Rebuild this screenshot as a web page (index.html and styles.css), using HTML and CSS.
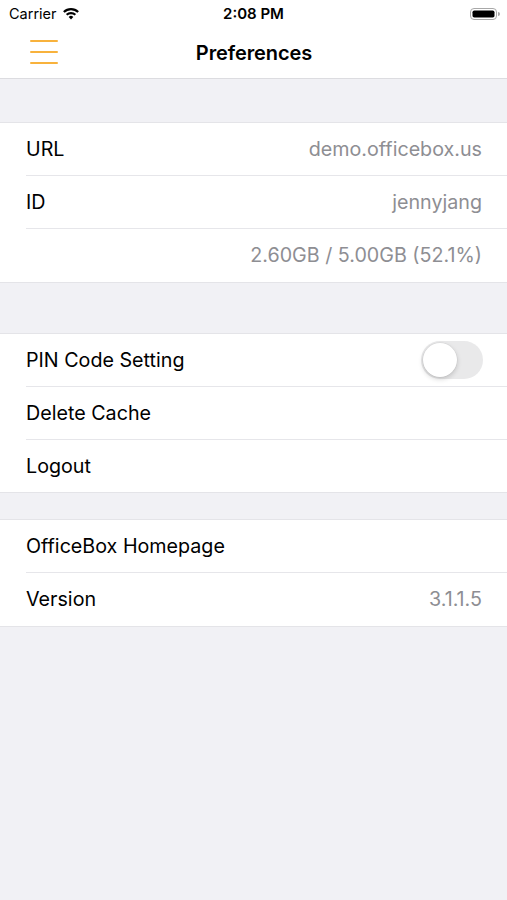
FILE: index.html
```html
<!DOCTYPE html>
<html>
<head>
<meta charset="utf-8">
<link rel="stylesheet" href="styles.css">
</head>
<body>
<div class="screen">
  <div class="status">
    <div class="status-left">
      <span class="carrier">Carrier</span>
      <svg class="wifi" width="18" height="13" viewBox="0 0 18 13">
        <path d="M9 12.5 L11.3 9.9 A3.4 3.4 0 0 0 6.7 9.9 Z" fill="#000"/>
        <path d="M3.9 7.1 A7.3 7.3 0 0 1 14.1 7.1 L12.6 8.6 A5.2 5.2 0 0 0 5.4 8.6 Z" fill="#000"/>
        <path d="M1.1 4.3 A11.3 11.3 0 0 1 16.9 4.3 L15.4 5.8 A9.2 9.2 0 0 0 2.6 5.8 Z" fill="#000"/>
      </svg>
    </div>
    <span class="time">2:08 PM</span>
    <div class="status-right">
      <svg class="battery" width="30" height="14" viewBox="0 0 30 14">
        <rect x="0.5" y="1.5" width="26" height="11" rx="3.5" fill="none" stroke="#a8a8a8" stroke-width="1"/>
        <rect x="2.5" y="3.5" width="22" height="7" rx="1.8" fill="#000"/>
        <path d="M28 5 A2 2 0 0 1 28 9 Z" fill="#a8a8a8"/>
      </svg>
    </div>
  </div>
  <div class="navbar">
    <button class="menu" aria-label="Menu">
      <span></span><span></span><span></span>
    </button>
    <h1 class="title">Preferences</h1>
  </div>

  <div class="gap gap-first"></div>
  <div class="group">
    <div class="row"><span class="label">URL</span><span class="value">demo.officebox.us</span></div>
    <div class="row"><span class="label">ID</span><span class="value">jennyjang</span></div>
    <div class="row"><span class="label"></span><span class="value">2.60GB / 5.00GB (52.1%)</span></div>
  </div>

  <div class="gap gap-second"></div>
  <div class="group">
    <div class="row"><span class="label">PIN Code Setting</span><span class="toggle"><span class="knob"></span></span></div>
    <div class="row"><span class="label">Delete Cache</span></div>
    <div class="row"><span class="label">Logout</span></div>
  </div>

  <div class="gap gap-third"></div>
  <div class="group">
    <div class="row"><span class="label">OfficeBox Homepage</span></div>
    <div class="row"><span class="label">Version</span><span class="value">3.1.1.5</span></div>
  </div>
</div>
</body>
</html>
```

FILE: styles.css
```css
* { box-sizing: border-box; }
html, body {
  margin: 0;
  padding: 0;
  height: 100%;
}
body {
  background: #f1f1f5;
  font-family: Inter, "Noto Sans", sans-serif;
  color: #000;
}
.screen {
  min-height: 900px;
  display: flex;
  flex-direction: column;
}
.status {
  height: 28px;
  background: #fff;
  display: flex;
  align-items: center;
  justify-content: space-between;
  padding: 0 7px 1px 9px;
  position: relative;
}
.status-left {
  display: flex;
  align-items: center;
  gap: 5px;
}
.carrier {
  font-size: 14.5px;
}
.wifi { margin-top: -1px; }
.time {
  position: absolute;
  left: 0;
  right: 0;
  text-align: center;
  font-size: 15px;
  font-weight: 600;
  pointer-events: none;
}
.status-right { display: flex; align-items: center; }
.navbar {
  height: 51px;
  background: #fff;
  border-bottom: 1px solid #dcdce0;
  display: flex;
  align-items: center;
  justify-content: center;
  position: relative;
}
.menu {
  position: absolute;
  left: 30px;
  top: 12px;
  width: 28px;
  height: 24px;
  padding: 0;
  border: 0;
  background: none;
  display: flex;
  flex-direction: column;
  justify-content: space-between;
}
.menu span {
  display: block;
  height: 2px;
  border-radius: 1px;
  background: #f8b23c;
}
.title {
  margin: 0 0 0 1px;
  font-size: 20px;
  font-weight: 600;
  letter-spacing: -0.1px;
}
.gap-first { height: 43px; }
.gap-second { height: 50px; }
.gap-third { height: 26px; }
.group {
  background: #fff;
  border-top: 1px solid #e4e4e8;
  border-bottom: 1px solid #e4e4e8;
  padding-left: 26px;
}
.row {
  height: 53px;
  display: flex;
  align-items: center;
  justify-content: space-between;
  padding-right: 25px;
  border-bottom: 1px solid #e6e6ea;
  font-size: 19.7px;
}
.row:last-child { border-bottom: 0; height: 52.5px; }
.value {
  color: #8e8e93;
}
.toggle {
  width: 62px;
  height: 38px;
  border-radius: 19px;
  background: #e9e9ea;
  position: relative;
  margin-right: -1px;
}
.knob {
  position: absolute;
  left: 2px;
  top: 2px;
  width: 34px;
  height: 34px;
  border-radius: 50%;
  background: #fff;
  box-shadow: 0 2px 5px rgba(0,0,0,0.18), 0 0 0 0.5px rgba(0,0,0,0.06);
}
```
